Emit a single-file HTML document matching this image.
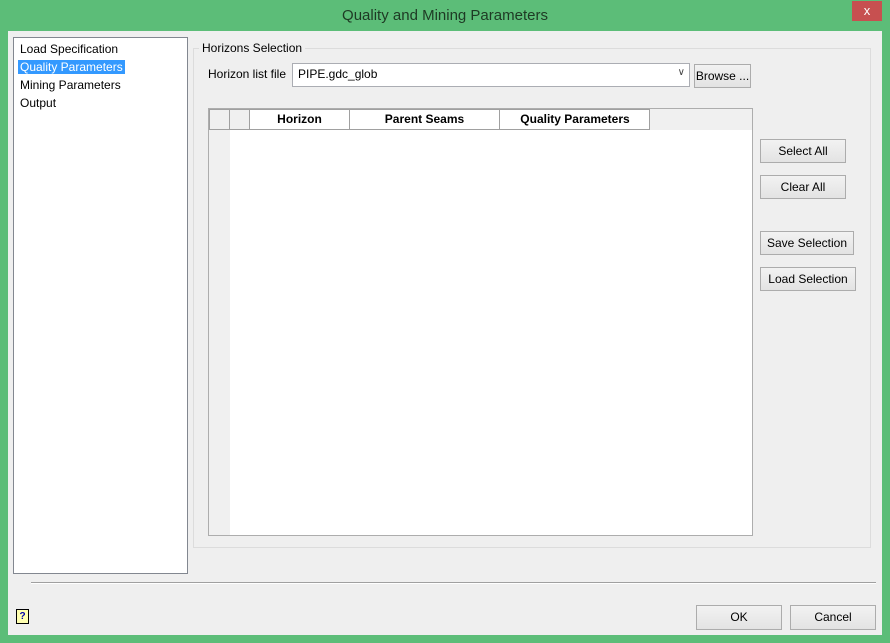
<!DOCTYPE html>
<html><head><style>
*{box-sizing:border-box;margin:0;padding:0}
body{width:890px;height:643px;background:#5cbd78;font-family:"Liberation Sans",sans-serif;font-size:12px;color:#000;position:relative;overflow:hidden}
.a{position:absolute}
.btn{position:absolute;background:linear-gradient(#f2f2f2,#e3e3e3);border:1px solid #acacac;text-align:center;line-height:22px;font-size:12px}
</style></head><body>
<div class="a" style="left:0;top:0;width:890px;height:31px;text-align:center;line-height:32px;font-size:15px;color:#1e3a24">Quality and Mining Parameters</div>
<div class="a" style="left:852px;top:1px;width:30px;height:20px;background:#c75050;color:#fff;text-align:center;line-height:20px;font-size:13px">x</div>
<div class="a" style="left:8px;top:31px;width:874px;height:604px;background:#efefef"></div>
<div class="a" style="left:13px;top:37px;width:175px;height:537px;background:#fff;border:1px solid #828790"></div>
<div class="a" style="left:20px;top:40px;line-height:18px">Load Specification<br><span style="background:#3399ff;color:#fff;padding:0 2px;margin-left:-2px">Quality Parameters</span><br>Mining Parameters<br>Output</div>
<div class="a" style="left:193px;top:48px;width:678px;height:500px;border:1px solid #dcdcdc"></div>
<div class="a" style="left:199px;top:41px;background:#efefef;padding:0 3px">Horizons Selection</div>
<div class="a" style="left:208px;top:67px">Horizon list file</div>
<div class="a" style="left:292px;top:63px;width:398px;height:24px;background:#fff;border:1px solid #abadb3;padding:3px 5px">PIPE.gdc_glob<span style="position:absolute;right:4px;top:3px;font-size:10px;color:#444">&#8744;</span></div>
<div class="btn" style="left:694px;top:64px;width:57px;height:24px">Browse ...</div>
<div class="a" style="left:208px;top:108px;width:545px;height:428px;background:#fff;border:1px solid #adadad"></div>
<div class="a" style="left:209px;top:109px;width:543px;height:21px;background:#f0f0f0"></div>
<div class="a" style="left:209px;top:130px;width:21px;height:405px;background:#f0f0f0"></div>
<div class="a" style="left:209px;top:109px;width:441px;height:21px;border:1px solid #a0a0a0;background:#fff;font-weight:bold;line-height:19px">
<span class="a" style="left:0;width:20px;height:19px;border-right:1px solid #a0a0a0;background:#f0f0f0"></span>
<span class="a" style="left:20px;width:20px;height:19px;border-right:1px solid #a0a0a0;background:#f0f0f0"></span>
<span class="a" style="left:40px;width:100px;height:19px;border-right:1px solid #a0a0a0;text-align:center">Horizon</span>
<span class="a" style="left:140px;width:150px;height:19px;border-right:1px solid #a0a0a0;text-align:center">Parent Seams</span>
<span class="a" style="left:290px;width:150px;height:19px;text-align:center">Quality Parameters</span>
</div>
<div class="btn" style="left:760px;top:139px;width:86px;height:24px">Select All</div>
<div class="btn" style="left:760px;top:175px;width:86px;height:24px">Clear All</div>
<div class="btn" style="left:760px;top:231px;width:94px;height:24px">Save Selection</div>
<div class="btn" style="left:760px;top:267px;width:96px;height:24px">Load Selection</div>
<div class="a" style="left:31px;top:582px;width:845px;height:2px;border-top:1px solid #a0a0a0;border-bottom:1px solid #fff"></div>
<div class="a" style="left:16px;top:609px;width:13px;height:15px;background:#ffffb0;border:1px solid #000;font-size:10px;font-weight:bold;text-align:center;line-height:13px;color:#00a">?</div>
<div class="btn" style="left:696px;top:605px;width:86px;height:25px">OK</div>
<div class="btn" style="left:790px;top:605px;width:86px;height:25px">Cancel</div>
</body></html>
